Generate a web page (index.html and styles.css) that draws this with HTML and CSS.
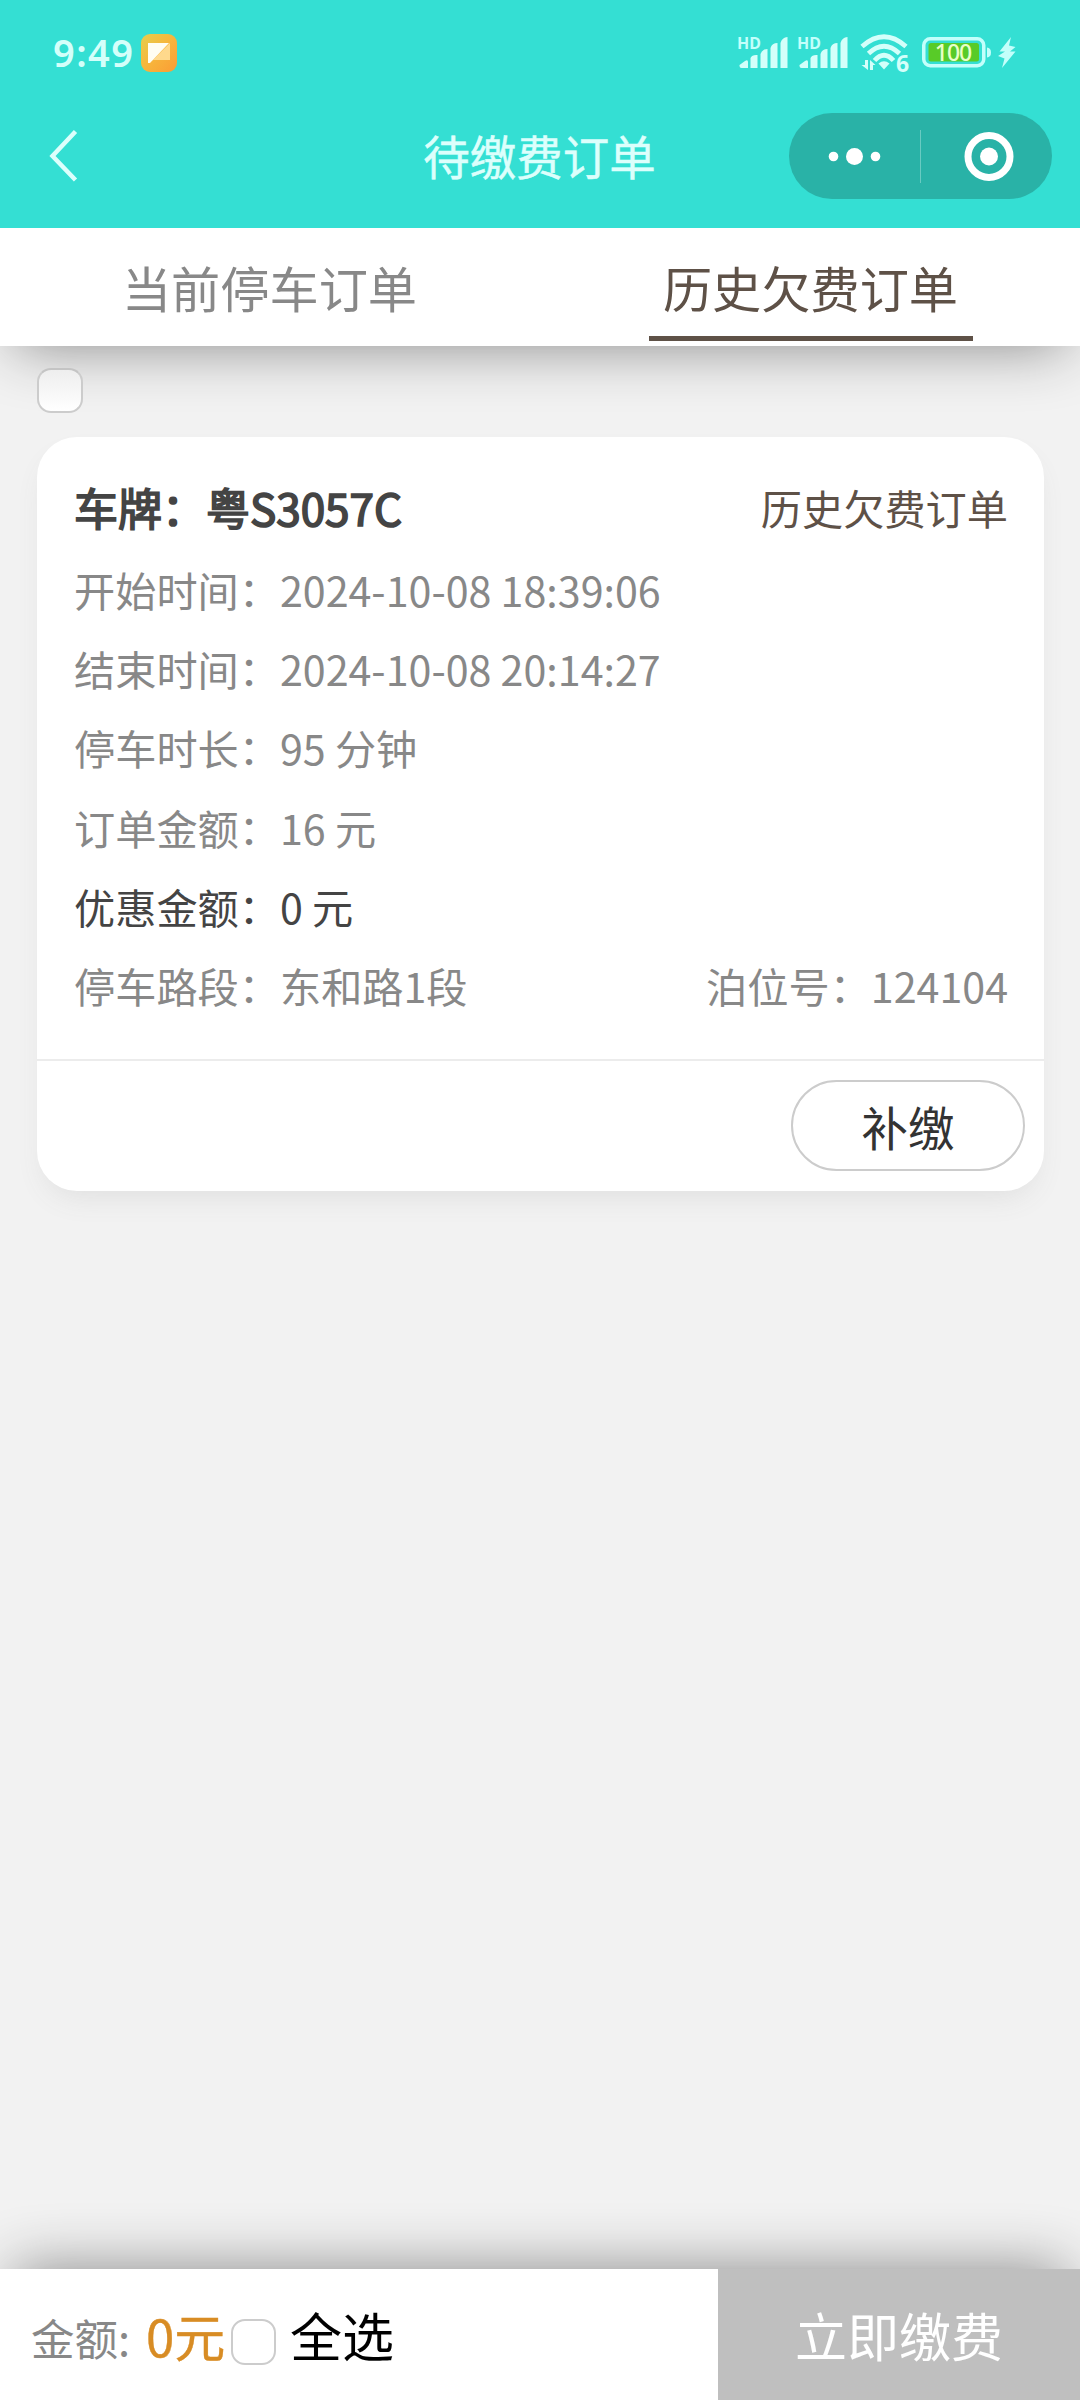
FILE: index.html
```html
<!DOCTYPE html>
<html lang="zh-CN">
<head>
<meta charset="utf-8">
<title>待缴费订单</title>
<link rel="stylesheet" href="styles.css">
</head>
<body>
<div class="app">
  <header class="header">
    <div class="status">
      <span class="clock">9:49</span>
      <svg class="app-icon" width="36" height="38" viewBox="0 0 36 38">
        <defs><linearGradient id="amber" x1="0" y1="0" x2="1" y2="1"><stop offset="0" stop-color="#e6cf4c"/><stop offset=".5" stop-color="#f7b53c"/><stop offset="1" stop-color="#fb9c35"/></linearGradient></defs>
        <rect width="36" height="38" rx="9" fill="url(#amber)"/>
        <path d="M29 9V26H12Z" fill="#ffd98c"/>
        <path d="M7 9H28L9 29H7Z" fill="#fffdf2"/>
      </svg>
      <svg class="signals" width="110" height="36" viewBox="0 0 110 36">
        <g id="signal">
          <text x="-1" y="13.500" class="hd">HD</text>
          <path d="M1.500 33V30L7 26Q10 24 10 27V33H3.500Q1.500 33 1.500 31ZM12.500 33V23Q14 19.500 19.500 20V33ZM22.500 33V19Q24 14 29.500 14V33ZM32.500 33V13Q34 8 39.500 8V33ZM42.500 33V8Q44 2.500 49.500 2V33Z" fill="#d4fffa"/>
        </g>
        <use href="#signal" x="60"/>
      </svg>
      <svg class="wifi" width="50" height="40" viewBox="0 0 50 40">
        <g fill="none" stroke="#d4fffa" stroke-width="4.800">
          <path d="M2 12.500Q24 -7 46 12.500"/><path d="M8.500 19.500Q24 5 39.500 19.500"/><path d="M14.500 26.500Q24 16 33.500 26.500"/>
        </g>
        <path d="M18.500 29.500Q24 25 29.500 29.500L24 35.500Z" fill="#d4fffa"/>
        <path d="M8 26V36L1.500 31H5V26ZM10 36V26L15.500 31H13V36Z" fill="#d4fffa"/>
        <text x="36" y="37.500" class="six">6</text>
      </svg>
      <svg class="battery" width="70" height="32" viewBox="0 0 70 32">
        <rect x="1.750" y="1.750" width="60" height="27" rx="6.500" fill="none" stroke="#c3fffb" stroke-width="3.500"/>
        <rect x="6.500" y="6" width="50.500" height="18.500" rx="2.500" fill="#58cb28"/>
        <path d="M65 10.500Q69 11 69 15.500T65 20.500Z" fill="#c3fffb"/>
        <text x="31" y="23.500" class="level">100</text>
      </svg>
      <svg class="bolt" width="18" height="32" viewBox="0 0 18 32"><path d="M13 0L1.500 14.500H7L0 19 6.500 21.500 4 31 17.500 14.500H12L17.500 10 11 8.500Z" fill="#c3fffb"/></svg>
    </div>
    <div class="nav">
      <svg class="back" width="30" height="54" viewBox="0 0 30 54"><path d="M27.500 2.500L4.500 27 27.500 51" fill="none" stroke="#dcfffc" stroke-width="4.500"/></svg>
      <h1 class="nav-title">待缴费订单</h1>
      <div class="capsule">
        <svg width="263" height="86" viewBox="0 0 263 86" fill="#fff">
          <circle cx="44.500" cy="43.500" r="4.800"/><circle cx="65.500" cy="43.500" r="8.500"/><circle cx="86.500" cy="43.500" r="4.800"/>
          <rect x="131" y="17" width="1" height="53" fill="#69cbc2"/>
          <circle cx="200" cy="43.500" r="21" fill="none" stroke="#fff" stroke-width="7"/><circle cx="200" cy="43.500" r="9"/>
        </svg>
      </div>
    </div>
  </header>
  <nav class="tabs">
    <div class="tab"><span>当前停车订单</span></div>
    <div class="tab active"><span>历史欠费订单</span></div>
  </nav>
  <main class="content">
    <span class="check shaded"></span>
    <section class="card">
      <div class="details">
        <div class="row plate"><span class="number">车牌：粤S3057C</span><span class="kind">历史欠费订单</span></div>
        <div class="row">开始时间：2024-10-08 18:39:06</div>
        <div class="row">结束时间：2024-10-08 20:14:27</div>
        <div class="row">停车时长：95 分钟</div>
        <div class="row">订单金额：16 元</div>
        <div class="row dark">优惠金额：0 元</div>
        <div class="row"><span>停车路段：东和路1段</span><span>泊位号：124104</span></div>
      </div>
      <div class="actions"><button class="repay">补缴</button></div>
    </section>
  </main>
  <footer class="footer">
    <div class="summary"><span class="label">金额:</span><span class="amount">0元</span><span class="check"></span><span class="all">全选</span></div>
    <button class="pay">立即缴费</button>
  </footer>
</div>
</body>
</html>
```
FILE: styles.css
```css
* { box-sizing: border-box; }
body { margin: 0; font-family: "Noto Sans CJK SC", sans-serif; background: #f2f2f2; }
button { font-family: inherit; padding: 0; border: 0; }
svg { flex: none; overflow: visible; }
.app { display: flex; flex-direction: column; width: 1080px; height: 2400px; overflow: hidden; background: #f2f2f2; }
.header { position: relative; z-index: 2; height: 228px; flex: none; background: #34dfd3; color: #dcfffc; }
.status { display: flex; align-items: flex-start; height: 113px; padding: 33px 0 0 53px; }
.clock { width: 88px; margin-top: -1px; font: 600 38px/40px "Noto Sans", sans-serif; letter-spacing: 1.4px; color: #d4fffa; }
.app-icon { margin-top: 1px; }
.signals { margin: 2px 0 0 561px; }
.hd { font: 700 16px "Noto Sans", sans-serif; fill: #c3fffb; }
.wifi { margin: 1px 0 0 12px; }
.six { font: 700 23px "Noto Sans", sans-serif; fill: #d4fffa; }
.battery { margin: 4px 0 0 12px; }
.level { font: 500 23px "Noto Sans", sans-serif; letter-spacing: -1px; fill: #e8ffc8; text-anchor: middle; }
.bolt { margin: 4px 0 0 6px; }
.nav { display: grid; grid-template-columns: 1fr auto 1fr; align-items: center; height: 86px; padding: 0 28px 0 48px; }
.nav-title { margin: -2px 0 0 -21px; font-size: 46.5px; line-height: 60px; font-weight: 400; -webkit-text-stroke: 0.5px; }
.capsule { justify-self: end; width: 263px; height: 86px; border-radius: 43px; background: #29b2a7; }
.tabs { position: relative; z-index: 1; display: flex; flex: none; height: 118px; background: #fff; box-shadow: 0 14px 60px -14px #888; }
.tab { flex: 1; display: flex; justify-content: center; font-size: 49.2px; line-height: 117px; color: #888; }
.tab span { width: 324px; height: 113px; text-align: center; }
.active { color: #5e5147; padding-left: 2px; }
.active span { border-bottom: 5px solid #5e5147; }
.content { position: relative; flex: 1; padding: 22px 36px 0 37px; }
.check { display: block; flex: none; width: 46px; height: 46px; border: 2px solid #ccc; border-radius: 14px; background: #fff; }
.shaded { position: relative; z-index: 2; height: 45px; border-color: #c4c4c4 #ccc #ccc; background: linear-gradient(#eee, #fff); }
.card { margin-top: 24px; height: 754px; border-radius: 40px; background: #fff; box-shadow: 0 14px 30px -10px #ddd; }
.details { height: 624px; padding: 31px 36px 0 37px; border-bottom: 2px solid #ececec; }
.row { display: flex; justify-content: space-between; height: 79.2px; line-height: 79px; font-size: 41.2px; color: #888; white-space: nowrap; }
.plate { height: 82px; font-size: 44px; color: #444; }
.number { -webkit-text-stroke: 1.7px #444; }
.kind { font-size: 41.2px; color: #5e5147; }
.dark { color: #444; }
.actions { display: flex; justify-content: flex-end; padding: 19px 19px 0 0; }
.repay { width: 234px; height: 91px; border: 2px solid #ccc; border-radius: 46px; background: #fff; color: #333; font-size: 46.5px; line-height: 88px; }
.footer { position: relative; display: flex; flex: none; height: 131px; background: #fff; box-shadow: 0 -14px 60px -14px #888; }
.summary { flex: 1; display: flex; align-items: center; padding-left: 31px; }
.label { width: 115px; font-size: 43.5px; line-height: 60px; color: #888; padding-top: 7px; }
.amount { width: 85px; font-size: 51px; line-height: 60px; color: #d88c24; white-space: nowrap; -webkit-text-stroke: 0.4px; }
.footer .check { width: 45px; margin-top: 15px; }
.all { margin-left: 14px; font-size: 52px; line-height: 60px; color: #000; }
.pay { width: 362px; background: #bfbfbf; color: #fff; font-size: 52px; }
```
